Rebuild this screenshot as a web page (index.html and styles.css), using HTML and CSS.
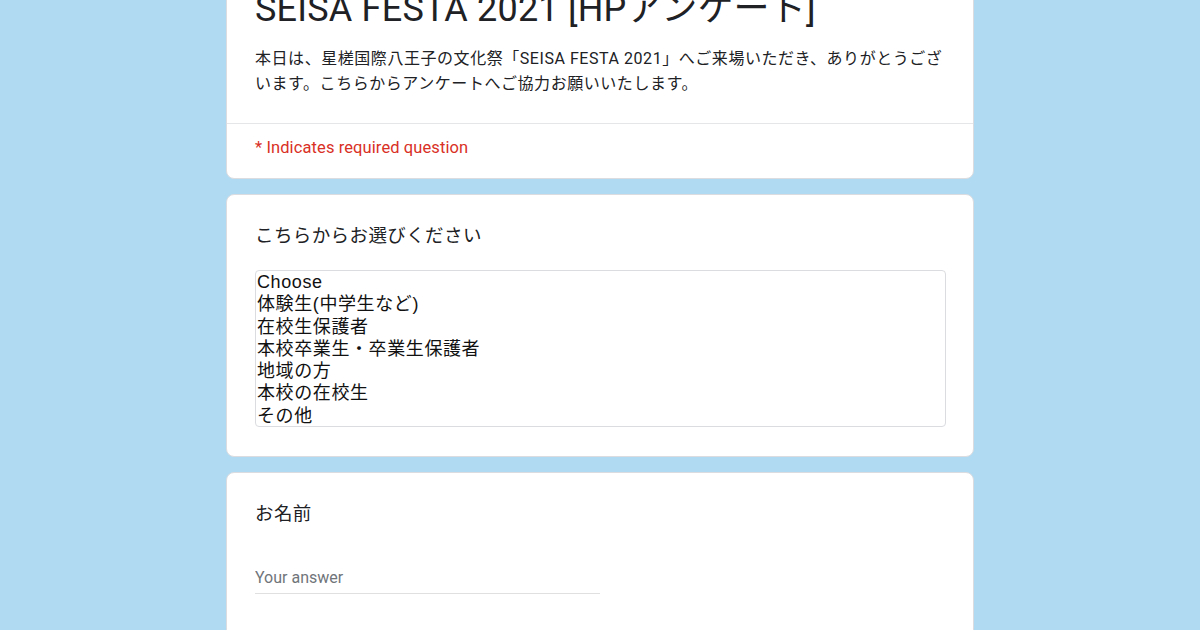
FILE: index.html
```html
<!DOCTYPE html>
<html lang="ja">
<head>
<meta charset="utf-8">
<title>SEISA FESTA 2021 [HPアンケート]</title>
<link rel="stylesheet" href="styles.css">
</head>
<body>
<main class="page">
  <section class="card header-card">
    <div class="header-main">
      <h1 class="form-title">SEISA FESTA 2021 [HPアンケート]</h1>
      <p class="form-desc">本日は、星槎国際八王子の文化祭「SEISA FESTA 2021」へご来場いただき、ありがとうございます。こちらからアンケートへご協力お願いいたします。</p>
    </div>
    <div class="header-foot">
      <span class="required-note">* Indicates required question</span>
    </div>
  </section>

  <section class="card question">
    <div class="q-title">こちらからお選びください</div>
    <div class="listbox" role="listbox" aria-label="こちらからお選びください">
      <div class="opt" role="option">Choose</div>
      <div class="opt" role="option">体験生(中学生など)</div>
      <div class="opt" role="option">在校生保護者</div>
      <div class="opt" role="option">本校卒業生・卒業生保護者</div>
      <div class="opt" role="option">地域の方</div>
      <div class="opt" role="option">本校の在校生</div>
      <div class="opt" role="option">その他</div>
    </div>
  </section>

  <section class="card question question-last">
    <div class="q-title">お名前</div>
    <input class="text-input" type="text" placeholder="Your answer">
  </section>
</main>
</body>
</html>
```

FILE: styles.css
```css
html, body {
  margin: 0;
  padding: 0;
}
body {
  background: #afdaf2;
  font-family: Roboto, "Noto Sans CJK JP", sans-serif;
  color: #202124;
  height: 630px;
  overflow: hidden;
}
.page {
  width: 748px;
  margin: -40px auto 0;
  display: flex;
  flex-direction: column;
  gap: 15px;
}
.card {
  background: #fff;
  border: 1px solid #dadce0;
  border-radius: 8px;
}
.header-main {
  padding: 24px 28px 27px;
  border-bottom: 1px solid #e4e6e8;
}
.form-title {
  margin: 0;
  font-family: Roboto, "Noto Sans CJK JP", sans-serif;
  font-weight: 400;
  font-size: 36px;
  line-height: 48px;
  letter-spacing: 0.2px;
  color: #202124;
}
.form-desc {
  margin: 13px 0 0;
  font-size: 16px;
  line-height: 25px;
  letter-spacing: 0.55px;
  color: #202124;
}
.header-foot {
  padding: 12px 28px 18px;
}
.required-note {
  display: block;
  font-size: 16.5px;
  line-height: 24px;
  letter-spacing: 0.1px;
  color: #d93025;
}
.question {
  padding: 29.5px 28px 29px;
  display: flex;
  flex-direction: column;
  align-items: flex-start;
}
.question-last {
  padding-bottom: 48px;
}
.q-title {
  font-size: 18.5px;
  line-height: 22px;
  letter-spacing: 0.4px;
  color: #202124;
}
.listbox {
  margin-top: 23.5px;
  width: 691px;
  height: 157px;
  box-sizing: border-box;
  border: 1px solid #dadce0;
  border-radius: 4px;
  background: #fff;
  font-family: "Liberation Sans", "Noto Sans CJK JP", sans-serif;
  font-size: 18px;
  letter-spacing: 0.6px;
  color: #111;
  overflow: hidden;
  display: flex;
  flex-direction: column;
}
.opt {
  padding: 0 1px;
  line-height: 22.3px;
  white-space: nowrap;
}
.text-input {
  margin-top: 36.5px;
  width: 345px;
  height: 33px;
  box-sizing: border-box;
  border: 0;
  border-bottom: 1px solid #e0e0e0;
  padding: 0;
  font-family: Roboto, "Noto Sans CJK JP", sans-serif;
  font-size: 16px;
  color: #202124;
  background: transparent;
  outline: none;
}
.text-input::placeholder {
  color: #70757a;
}
```
